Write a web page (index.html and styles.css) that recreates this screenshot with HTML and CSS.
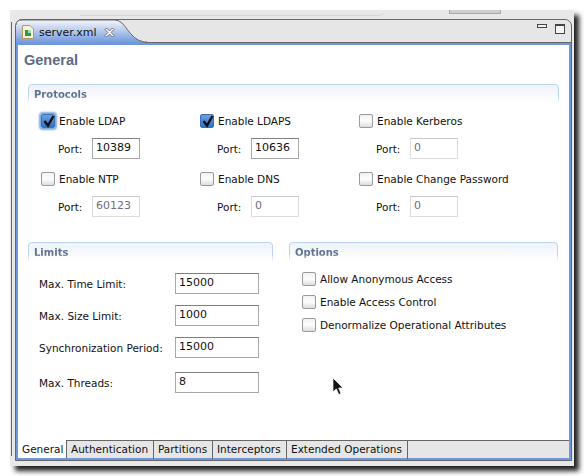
FILE: index.html
```html
<html>
  <head>
    <title>server.xml</title>
    <link rel="stylesheet" href="styles.css">
  </head>
  <body>
    <div class="window">
      <div class="backstrip">
        <div class="backtab"></div>
        <div class="backbutton"></div>
      </div>
      <div class="panel">
        <div class="tabhead">
          <div class="filetab">
            <svg class="tabshape" width="131" height="24" viewBox="0 0 131 24">
              <defs>
                <linearGradient id="tabfill" x1="0" y1="0" x2="0" y2="1">
                  <stop offset="0" stop-color="#f4f7fc"/>
                  <stop offset="1" stop-color="#7097dc"/>
                </linearGradient>
              </defs>
              <path d="M0 24V6Q0 1 6 1H99C110 1 112 20 128 23L131 24Z" fill="url(#tabfill)"/>
              <path d="M0 6Q0 1 6 1H99C110 1 112 20 128 23H131" fill="none" stroke="#666"/>
            </svg>
            <svg class="fileicon" width="12" height="14" viewBox="0 0 12 14">
              <path d="M.5.5H8L11.5 4V13.500H.5Z" fill="#f6f2dc" stroke="#b39a55"/>
              <rect x="3" y="5" width="6" height="6" fill="#2f9a46"/>
              <rect x="6" y="5" width="3" height="3" fill="#a7d8ae"/>
            </svg>
            <span class="filename">server.xml</span>
            <svg class="closeicon" width="11" height="11" viewBox="0 0 11 11">
              <path d="M1 2.500 2.500 1 5.500 4 8.500 1 10 2.500 7 5.500 10 8.500 8.500 10 5.500 7 2.500 10 1 8.500 4 5.500Z" fill="#fff" stroke="#555" stroke-width=".8"/>
            </svg>
          </div>
          <div class="viewbuttons">
            <span class="minbutton"></span>
            <span class="maxbutton"></span>
          </div>
        </div>

        <div class="content">
          <div class="page">
            <h1>General</h1>

            <section class="box">
              <h2>Protocols</h2>
              <div class="protocols">
                <div class="protocol">
                  <label class="check"><span class="box-check focused"><svg width="13" height="13" viewBox="0 0 13 13"><path d="M2.500 6 6 10.500 11.500 1" fill="none" stroke="#111" stroke-width="2.400"/></svg></span>Enable LDAP</label>
                  <div class="port"><span>Port:</span><span class="field">10389</span></div>
                </div>
                <div class="protocol">
                  <label class="check"><span class="box-check on"><svg width="13" height="13" viewBox="0 0 13 13"><path d="M2.500 6 6 10.500 11.500 1" fill="none" stroke="#111" stroke-width="2.400"/></svg></span>Enable LDAPS</label>
                  <div class="port"><span>Port:</span><span class="field">10636</span></div>
                </div>
                <div class="protocol">
                  <label class="check"><span class="box-check"></span>Enable Kerberos</label>
                  <div class="port"><span>Port:</span><span class="field off">0</span></div>
                </div>
                <div class="protocol">
                  <label class="check"><span class="box-check"></span>Enable NTP</label>
                  <div class="port"><span>Port:</span><span class="field off">60123</span></div>
                </div>
                <div class="protocol">
                  <label class="check"><span class="box-check"></span>Enable DNS</label>
                  <div class="port"><span>Port:</span><span class="field off">0</span></div>
                </div>
                <div class="protocol">
                  <label class="check"><span class="box-check"></span>Enable Change Password</label>
                  <div class="port"><span>Port:</span><span class="field off">0</span></div>
                </div>
              </div>
            </section>

            <div class="columns">
              <section class="box limits">
                <h2>Limits</h2>
                <div class="limit"><span>Max. Time Limit:</span><span class="field wide">15000</span></div>
                <div class="limit"><span>Max. Size Limit:</span><span class="field wide">1000</span></div>
                <div class="limit"><span>Synchronization Period:</span><span class="field wide">15000</span></div>
                <div class="limit threads"><span>Max. Threads:</span><span class="field wide">8</span></div>
              </section>
              <section class="box options">
                <h2>Options</h2>
                <label class="check"><span class="box-check"></span>Allow Anonymous Access</label>
                <label class="check"><span class="box-check"></span>Enable Access Control</label>
                <label class="check"><span class="box-check"></span>Denormalize Operational Attributes</label>
              </section>
            </div>
          </div>

          <div class="pagetabs">
            <span class="pagetab active">General</span>
            <span class="pagetab auth">Authentication</span>
            <span class="pagetab parts">Partitions</span>
            <span class="pagetab inter">Interceptors</span>
            <span class="pagetab ext">Extended Operations</span>
          </div>
        </div>
      </div>

      <svg class="cursor" width="13" height="19" viewBox="0 0 13 19">
        <path d="M1 1V15L4.300 11.800 6.800 17.500 9 16.500 6.700 11H11Z" fill="#111" stroke="#fff" stroke-width=".7"/>
      </svg>
    </div>
  </body>
</html>
```

FILE: styles.css
```css
body {
  background: #ffffff;
  color: #111111;
  font-family: "DejaVu Sans", sans-serif;
  font-size: 10.500px;
  margin: 0;
}

.window {
  background: #e8e8e8;
  box-shadow: 5px 5px 5px #222222;
  box-sizing: border-box;
  height: 456px;
  margin: 10px 0 0 10px;
  padding: 9px 2px 5px 5px;
  position: relative;
  width: 564px;
}

/* the dark edge of the window behind, left of the panel */
.window::before {
  background: #666666;
  bottom: 10px;
  content: "";
  left: 1px;
  position: absolute;
  top: 12px;
  width: 1px;
}

.backstrip {
  display: flex;
  height: 9px;
  left: 0;
  position: absolute;
  right: 0;
  top: 0;
}

.backtab {
  border-bottom: 1px solid #d4d4d4;
  border-radius: 0 0 10px 0;
  height: 5px;
  margin-left: 70px;
  width: 305px;
}

.backbutton {
  background: #cfcfcf;
  border: 1px solid #a8a8a8;
  border-top: 0;
  height: 3px;
  margin-left: 64px;
  width: 50px;
}

.panel {
  border: 1px solid #666666;
  border-radius: 7px 7px 0 0;
  box-sizing: border-box;
  display: flex;
  flex-direction: column;
  height: 442px;
  position: relative;
}

.tabhead {
  background: #e6e6e6;
  border-radius: 7px 7px 0 0;
  box-shadow: inset 0 -1px #666666;
  display: flex;
  height: 23px;
  justify-content: space-between;
}

.filetab {
  align-items: center;
  display: flex;
  padding: 1px 0 0 6px;
  position: relative;
  width: 125px;
}

.tabshape {
  left: 0;
  position: absolute;
  top: -1px;
}

.fileicon,
.filename,
.closeicon {
  position: relative;
}

.filename {
  font-size: 11px;
  margin-left: 5px;
}

.closeicon {
  margin-left: 7px;
}

.viewbuttons {
  align-items: flex-start;
  display: flex;
  gap: 8px;
  padding: 4px 6px 0 0;
}

.minbutton {
  background: #f4f4f4;
  border: 1px solid #444444;
  height: 2px;
  width: 8px;
}

.maxbutton {
  background: #f4f4f4;
  border: 1px solid #444444;
  border-top-width: 2px;
  box-sizing: border-box;
  height: 10px;
  width: 10px;
}

.content {
  background: #ffffff;
  border: 2px solid #6f97dc;
  display: flex;
  flex: 1;
  flex-direction: column;
  min-height: 0;
}

.page {
  flex: 1;
  padding: 0 10px;
}

h1 {
  color: #5b6b84;
  font-family: "Liberation Sans", sans-serif;
  font-size: 14.500px;
  font-weight: bold;
  line-height: 18px;
  margin: 6px 0 0 -4px;
}

h2 {
  background: linear-gradient(#eef3fb, #ffffff);
  border: 1px solid #bdd3f3;
  border-bottom: 0;
  border-radius: 4px 4px 0 0;
  box-sizing: border-box;
  color: #5f7290;
  font-size: 10px;
  font-weight: bold;
  height: 20px;
  line-height: 20px;
  margin: 0;
  -webkit-mask-image: linear-gradient(#000000 60%, transparent);
  mask-image: linear-gradient(#000000 60%, transparent);
  padding-left: 5px;
}

.box {
  margin-top: 15px;
}

.protocols {
  display: grid;
  grid-template-columns: repeat(3, 159px);
  margin-top: 10px;
  padding-left: 13px;
  row-gap: 13px;
}

.check {
  align-items: center;
  display: flex;
  gap: 4px;
  height: 14px;
}

.box-check {
  background: linear-gradient(#f2f2f2, #fdfdfd 50%, #dddddd);
  border: 1px solid #9a9a9a;
  border-radius: 2px;
  box-sizing: border-box;
  display: block;
  flex: none;
  height: 14px;
  width: 14px;
}

.box-check.on,
.box-check.focused {
  background: linear-gradient(#6d9fe0, #2f72c8);
  border-color: #3d6fb0;
}

.box-check.focused {
  box-shadow: 0 0 2px 2px #7da8e0;
}

.box-check svg {
  display: block;
}

.port {
  align-items: center;
  display: flex;
  height: 21px;
  margin-top: 10px;
  padding-left: 17px;
}

.port span:first-child {
  width: 34px;
}

.field {
  background: #ffffff;
  border: 1px solid #a8a8a8;
  border-top-color: #808080;
  box-sizing: border-box;
  display: block;
  font-size: 11px;
  height: 21px;
  line-height: 17px;
  padding-left: 3px;
  width: 48px;
}

.field.off {
  border-color: #dcdcdc;
  border-top-color: #c8c8c8;
  color: #6e6e7c;
}

.field.wide {
  width: 84px;
}

.columns {
  display: grid;
  gap: 16px;
  grid-template-columns: 245px 269px;
  margin-top: 25px;
}

.columns .box {
  margin-top: 0;
}

.limit {
  align-items: center;
  display: flex;
  height: 21px;
  justify-content: space-between;
  margin: 11px 14px 0 11px;
}

.limit.threads {
  margin-top: 14px;
}

.options .check {
  margin: 0 0 9px 13px;
}

.options h2 + .check {
  margin-top: 10px;
}

.pagetabs {
  background: #e6e6e6;
  border-top: 1px solid #666666;
  display: flex;
  height: 17px;
  line-height: 17px;
  white-space: nowrap;
}

.pagetab {
  border-right: 1px solid #666666;
  box-sizing: border-box;
  height: 18px;
  padding-left: 4px;
}

.pagetab.active {
  background: #ffffff;
  margin-top: -1px;
  padding-top: 1px;
  width: 49px;
}

.pagetab.auth {
  width: 87px;
}

.pagetab.parts {
  width: 59px;
}

.pagetab.inter {
  width: 74px;
}

.pagetab.ext {
  width: 121px;
}

.cursor {
  left: 322px;
  position: absolute;
  top: 367px;
}
```
